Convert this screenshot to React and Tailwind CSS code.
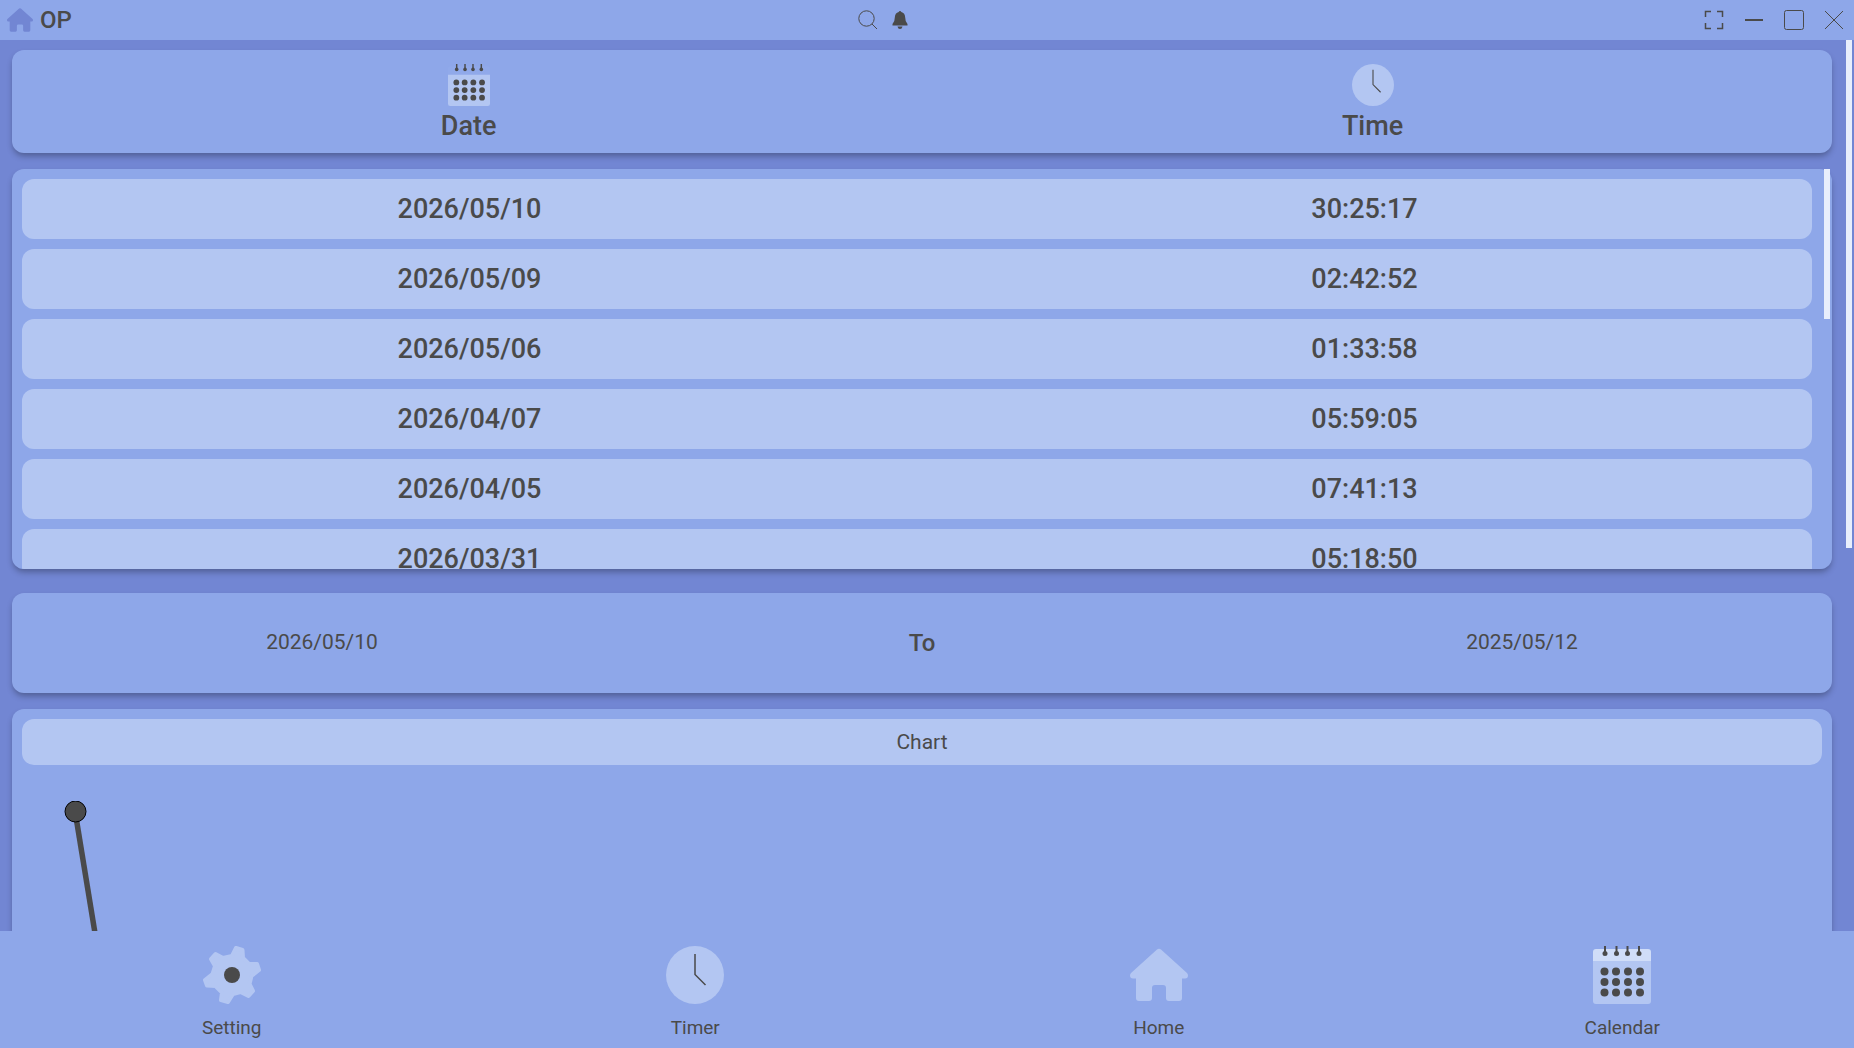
import React, { useState } from 'react';

const records = [
  { date: '2026/05/10', time: '30:25:17' },
  { date: '2026/05/09', time: '02:42:52' },
  { date: '2026/05/06', time: '01:33:58' },
  { date: '2026/04/07', time: '05:59:05' },
  { date: '2026/04/05', time: '07:41:13' },
  { date: '2026/03/31', time: '05:18:50' },
];

const HomeIcon = ({ className }) => (
  <svg viewBox="0 0 58 58" className={className} fill="currentColor" aria-hidden="true">
    <path d="M27 3.6Q29 2 31 3.6L57 27Q58 28 58 29.5Q58 32.5 55 32.5H52V52Q52 55 49 55H39Q36 55 36 52V42Q36 39 33 39H25Q22 39 22 42V52Q22 55 19 55H9Q6 55 6 52V32.5H3Q0 32.5 0 29.5Q0 28 1 27Z" />
  </svg>
);

const ClockIcon = ({ className }) => (
  <svg viewBox="0 0 58 58" className={className} aria-hidden="true">
    <circle cx="29" cy="29" r="29" fill="#b3c6f2" />
    <path d="M29 8V28.500L39.500 39" fill="none" stroke="#4a4a4a" strokeWidth="1.5" />
  </svg>
);

const CalendarIcon = ({ className, top }) => (
  <svg viewBox="0 0 58 58" className={className} aria-hidden="true">
    <path d="M0 15V6Q0 3 3 3H55Q58 3 58 6V15Z" fill={top} />
    <path d="M0 15H58V55Q58 58 55 58H3Q0 58 0 55Z" fill="#b3c6f2" />
    {[12, 23.5, 34.5, 46].map((x) => (
      <g key={x} fill="#4a4a4a">
        <rect x={x - 1} y="0" width="2" height="8" />
        <circle cx={x} cy="7.5" r="2.500" />
      </g>
    ))}
    {[25.5, 36, 46.5].map((y) =>
      [11.5, 23, 35, 47].map((x) => <circle key={`${x}-${y}`} cx={x} cy={y} r="4" fill="#4a4a4a" />)
    )}
  </svg>
);

const GearIcon = ({ className }) => (
  <svg viewBox="0 0 58 58" className={className} aria-hidden="true">
    <path
      d="M33 2L39.500 4L40 12L46 18L54 18L56 24L48.500 30L46.500 38L50 45L45.500 50L37.500 46L30 48L25 56L18 54L19 46.500L12.500 40L4 39.500L2 34L9.500 28L12 20L8 13L12.500 8L20 12L29 10Z"
      fill="#b3c6f2"
      stroke="#b3c6f2"
      strokeWidth="4"
      strokeLinejoin="round"
    />
    <circle cx="29" cy="29" r="8" fill="#4a4a4a" />
  </svg>
);

const SearchIcon = () => (
  <svg viewBox="0 0 20 20" className="size-5" fill="none" stroke="#4a4a4a" aria-hidden="true">
    <circle cx="8.5" cy="8.5" r="7.700" />
    <path d="M14 14L19 19" />
  </svg>
);

const BellIcon = () => (
  <svg viewBox="0 0 20 20" className="size-5" fill="#4a4a4a" aria-hidden="true">
    <path d="M10 1Q11 1 11.300 2.100Q15 3 15.200 7.500Q15.200 12 17.500 14V15.500H2.500V14Q4.800 12 4.800 7.500Q5 3 8.700 2.100Q9 1 10 1ZM7.500 16.500H12.500Q12 19 10 19Q8 19 7.500 16.500Z" />
  </svg>
);

const windowButtons = [
  { label: 'Fullscreen', width: 1.5, d: 'M1.500 7V1.500H7M13 1.500H18.500V7M18.500 13V18.500H13M7 18.500H1.500V13' },
  { label: 'Minimize', width: 2, d: 'M1 10H19' },
  { label: 'Maximize', width: 1, d: 'M2.500 0.500H17.500Q19.500 0.500 19.500 2.500V17.500Q19.500 19.500 17.500 19.500H2.500Q0.500 19.500 0.500 17.500V2.500Q0.500 0.500 2.500 0.500Z' },
  { label: 'Close', width: 1, d: 'M1 1L19 19M19 1L1 19' },
];

const navItems = [
  { label: 'Setting', icon: <GearIcon className="size-[58px]" /> },
  { label: 'Timer', icon: <ClockIcon className="size-[58px]" /> },
  { label: 'Home', icon: <HomeIcon className="size-[58px] text-[#b3c6f2]" /> },
  { label: 'Calendar', icon: <CalendarIcon className="size-[58px]" top="#d0ddf8" /> },
];

const TitleBar = () => (
  <header className="flex h-10 shrink-0 items-center justify-between bg-[#8ea7e9]">
    <div className="flex items-center gap-[7px] pr-[3px] pl-[7px]">
      <HomeIcon className="size-[26px] text-[#7286d3]" />
      <h1 className="text-2xl font-medium">OP</h1>
    </div>
    <div className="flex">
      <button aria-label="Search" className="flex size-8 items-center justify-center">
        <SearchIcon />
      </button>
      <button aria-label="Notifications" className="flex size-8 items-center justify-center">
        <BellIcon />
      </button>
    </div>
    <div className="flex">
      {windowButtons.map((b) => (
        <button key={b.label} aria-label={b.label} className="flex size-10 items-center justify-center">
          <svg viewBox="0 0 20 20" className="size-5" fill="none" stroke="#4a4a4a" strokeWidth={b.width}>
            <path d={b.d} />
          </svg>
        </button>
      ))}
    </div>
  </header>
);

const RecordTable = () => (
  <div className="relative">
    <table className="block">
      <thead className="block rounded-xl bg-[#8ea7e9] px-[6px] pt-[14px] pb-[7px] shadow-[0_4px_6px_-1px_rgba(0,0,0,0.3)]">
        <tr className="flex justify-around">
          <th className="flex flex-col items-center text-[27px] leading-10 font-medium">
            <CalendarIcon className="size-[42px]" top="#90a9ea" />
            Date
          </th>
          <th className="flex flex-col items-center text-[27px] leading-10 font-medium">
            <ClockIcon className="size-[42px]" />
            Time
          </th>
        </tr>
      </thead>
      <tbody className="mt-4 flex h-[400px] flex-col gap-[10px] overflow-y-auto rounded-xl bg-[#8ea7e9] py-[10px] pr-5 pl-[10px] shadow-[0_4px_6px_-1px_rgba(0,0,0,0.3)] [scrollbar-width:none]">
        {records.map((r) => (
          <tr key={r.date} className="grid h-[60px] shrink-0 grid-cols-2 items-center rounded-xl bg-[#b3c6f2] text-center text-[27px] font-medium">
            <td>{r.date}</td>
            <td>{r.time}</td>
          </tr>
        ))}
      </tbody>
    </table>
    <div className="absolute right-[2px] bottom-[250px] h-[150px] w-[6px] bg-[#e8eefc]" />
  </div>
);

const Chart = () => (
  <section className="rounded-xl bg-[#8ea7e9] p-[10px] shadow-[0_4px_6px_-1px_rgba(0,0,0,0.3)]">
    <h2 className="rounded-xl bg-[#b3c6f2] text-center text-[21px] leading-[46px]">Chart</h2>
    <svg className="mt-9 h-[700px] w-full" aria-label="Time per day">
      <path d="M53 10L148 590" stroke="#4a4a4a" strokeWidth="5.500" fill="none" />
      <circle cx="53.500" cy="10.500" r="10.500" fill="#4a4a4a" stroke="#000" />
    </svg>
  </section>
);

export default function App() {
  const [active, setActive] = useState('Calendar');

  return (
    <div className="flex h-screen flex-col overflow-hidden bg-[#7286d3] font-[Roboto,sans-serif] text-[#4a4a4a]">
      <TitleBar />

      <div className="relative min-h-0 flex-1">
        <main className="h-full overflow-y-auto pt-[10px] pr-[22px] pl-3 [scrollbar-width:none]">
          <RecordTable />

          <section className="mt-6 mb-4 grid h-[100px] grid-cols-3 place-items-center rounded-xl bg-[#8ea7e9] px-[10px] shadow-[0_4px_6px_-1px_rgba(0,0,0,0.3)]">
            <button className="text-[21px]">2026/05/10</button>
            <span className="text-2xl font-medium">To</span>
            <button className="text-[21px]">2025/05/12</button>
          </section>

          <Chart />
        </main>
        <div className="absolute top-0 right-[2px] h-[57%] w-[6px] bg-[#e8eefc]" />
      </div>

      <nav className="grid shrink-0 grid-cols-4 bg-[#8ea7e9] pt-[15px] pb-[6px]">
        {navItems.map((item) => (
          <button
            key={item.label}
            aria-current={active === item.label ? 'page' : undefined}
            onClick={() => setActive(item.label)}
            className="flex flex-col items-center gap-[10px] text-[19px] leading-7"
          >
            {item.icon}
            {item.label}
          </button>
        ))}
      </nav>
    </div>
  );
}
